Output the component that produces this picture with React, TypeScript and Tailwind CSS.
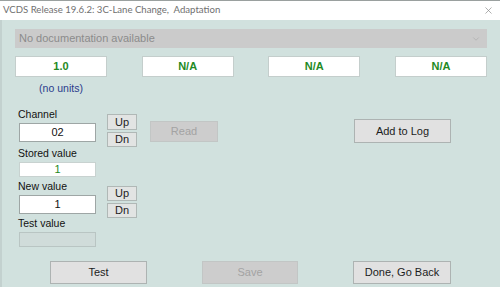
import { ChevronDown, X } from 'lucide-react'

const font = 'font-["Liberation_Sans",Arial,sans-serif]'

function ValueBox({ value }: { value: string }) {
  return (
    <div className="flex h-[21px] w-[92px] items-center justify-center border border-[#c4cecc] bg-white text-[11px] font-bold text-[#1f8a24]">
      {value}
    </div>
  )
}

function SmallButton({ label, className = '' }: { label: string; className?: string }) {
  return (
    <div
      className={`flex h-[15px] w-[30px] items-center justify-center border border-[#b0b8b6] bg-[#e2e4e3] text-[11px] leading-none text-[#222] ${className}`}
    >
      {label}
    </div>
  )
}

function Button({ label, disabled = false, className = '' }: { label: string; disabled?: boolean; className?: string }) {
  return (
    <div
      className={`flex items-center justify-center border text-[11px] ${
        disabled
          ? 'border-[#c2c6c5] bg-[#cdcdcd] text-[#a3a3a3]'
          : 'border-[#adb3b2] bg-[#e1e1e1] text-[#1c1c1c]'
      } ${className}`}
    >
      {label}
    </div>
  )
}

export default function App() {
  return (
    <div className={`flex h-[287px] w-[500px] flex-col overflow-hidden bg-[#d1e1de] ${font}`}>
      {/* title bar */}
      <div className="flex h-[20px] items-center justify-between border-t border-[#9aa09f] bg-white pl-[3px] pr-[6px]">
        <span className='font-["Lato",sans-serif] text-[9.6px] text-[#707070]'>
          VCDS Release 19.6.2: 3C-Lane Change,&nbsp; Adaptation
        </span>
        <X className="h-[11px] w-[11px] text-[#8a8a8a]" strokeWidth={1.5} />
      </div>

      <div className="flex flex-1 flex-col border-l-2 border-[#c3d1cf] pl-[13px] pr-[13px]">
        {/* documentation dropdown */}
        <div className="mt-[9px] flex h-[19px] items-center justify-between bg-[#cbcbcb] pl-[4px] pr-[6px]">
          <span className="text-[11px] text-[#8c8c8c]">No documentation available</span>
          <ChevronDown className="h-[10px] w-[10px] text-[#a6a6a6]" strokeWidth={1.5} />
        </div>

        {/* measured values */}
        <div className="mt-[8px] flex justify-between">
          <ValueBox value="1.0" />
          <ValueBox value="N/A" />
          <ValueBox value="N/A" />
          <ValueBox value="N/A" />
        </div>
        <div className="mt-[5px] w-[92px] text-center text-[10.5px] leading-[12px] text-[#2a3b8c]">(no units)</div>

        <div className="flex items-start">
          {/* left column */}
          <div className="ml-[4px] flex w-[77px] flex-col text-[10.5px] leading-[13px] text-[#111]">
            <span className="-ml-[1px] mt-[14px]">Channel</span>
            <div className="mt-[2px] flex h-[19px] items-center justify-center border border-[#9ea6a5] bg-white text-[11px]">02</div>
            <span className="-ml-[1px] mt-[5px]">Stored value</span>
            <div className="mt-[2px] flex h-[15px] items-center justify-center border border-[#c8d2d0] bg-white text-[11px] text-[#1f8a24]">1</div>
            <span className="-ml-[1px] mt-[3px]">New value</span>
            <div className="mt-[2px] flex h-[19px] items-center justify-center border border-[#9ea6a5] bg-white text-[11px]">1</div>
            <span className="-ml-[1px] mt-[3px]">Test value</span>
            <div className="mt-[2px] h-[15px] border border-[#b9c5c3] bg-[#d0dcda]" />
          </div>

          {/* up / down */}
          <div className="ml-[11px] flex flex-col">
            <SmallButton label="Up" className="mt-[20px] h-[16px]" />
            <SmallButton label="Dn" className="mt-[2px]" />
            <SmallButton label="Up" className="mt-[39px]" />
            <SmallButton label="Dn" className="mt-[2px]" />
          </div>

          <Button label="Read" disabled className="ml-[13px] mt-[27px] h-[21px] w-[68px]" />
          <Button label="Add to Log" className="ml-[136px] mt-[25px] h-[24px] w-[97px]" />
        </div>

        {/* bottom buttons */}
        <div className="mt-[14px] flex pl-[35px]">
          <Button label="Test" className="h-[23px] w-[97px]" />
          <Button label="Save" disabled className="ml-[55px] h-[23px] w-[96px]" />
          <Button label="Done, Go Back" className="ml-[55px] h-[23px] w-[98px]" />
        </div>
      </div>
    </div>
  )
}
